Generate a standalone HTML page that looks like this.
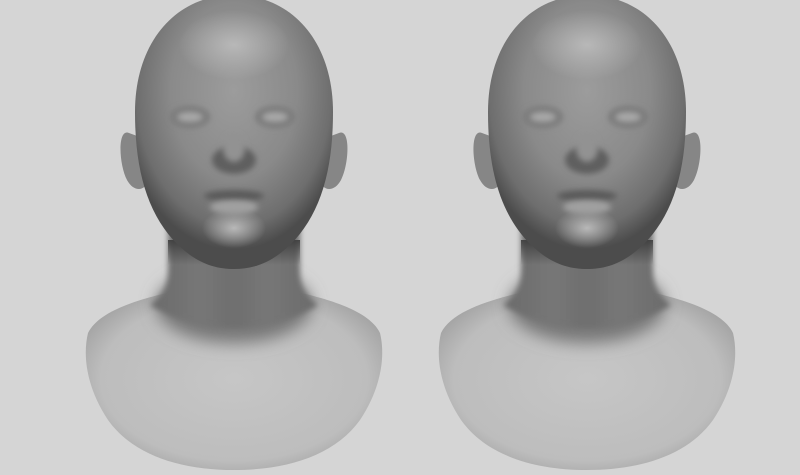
<!DOCTYPE html>
<html><head><style>
html,body{margin:0;padding:0;background:#d5d5d5;width:800px;height:475px;overflow:hidden}
</style></head><body>
<svg width="800" height="475" viewBox="0 0 800 475" xmlns="http://www.w3.org/2000/svg">
<defs>
<filter id="b3" x="-50%" y="-50%" width="200%" height="200%"><feGaussianBlur stdDeviation="3"/></filter>
<filter id="b8" x="-50%" y="-50%" width="200%" height="200%"><feGaussianBlur stdDeviation="8"/></filter>
<radialGradient id="head" cx="0.5" cy="0.35" r="0.58">
<stop offset="0" stop-color="#9c9c9c"/><stop offset="0.55" stop-color="#8a8a8a"/><stop offset="0.85" stop-color="#6e6e6e"/><stop offset="1" stop-color="#4c4c4c"/>
</radialGradient>
<radialGradient id="bust" cx="0.5" cy="0.5" r="0.6">
<stop offset="0" stop-color="#c6c6c6"/><stop offset="0.75" stop-color="#bdbdbd"/><stop offset="1" stop-color="#9c9c9c"/>
</radialGradient>
<linearGradient id="neck" x1="0" y1="0" x2="1" y2="0">
<stop offset="0" stop-color="#6a6a6a"/><stop offset="0.3" stop-color="#777"/><stop offset="0.5" stop-color="#6e6e6e"/><stop offset="0.7" stop-color="#777"/><stop offset="1" stop-color="#6a6a6a"/>
</linearGradient>
<linearGradient id="neckfade" x1="0" y1="0" x2="0" y2="1">
<stop offset="0" stop-color="#3c3c3c" stop-opacity="0.9"/><stop offset="0.3" stop-color="#3c3c3c" stop-opacity="0"/>
</linearGradient>
<radialGradient id="lite" cx="0.5" cy="0.5" r="0.5">
<stop offset="0" stop-color="#b8b8b8"/><stop offset="1" stop-color="#b8b8b8" stop-opacity="0"/>
</radialGradient>
<g id="bustg">
<path d="M190 288 C150 296 100 308 88 333 C82 358 88 390 108 420 C133 455 180 470 234 470 C288 470 335 455 360 420 C380 390 386 358 380 333 C368 308 318 296 278 288 Z" fill="url(#bust)"/>
<ellipse cx="234" cy="305" rx="78" ry="38" fill="#777" filter="url(#b8)"/>
<path d="M168 200 L168 270 C168 290 160 298 150 305 C200 335 268 335 318 305 C308 298 300 290 300 270 L300 200 Z" fill="url(#neck)" filter="url(#b3)"/>
<path d="M168 240 L168 300 C200 330 268 330 300 300 L300 240 Z" fill="url(#neckfade)"/>
<path d="M129 133 C117 128 119 165 127 180 C134 193 146 191 148 180 L148 140 Z" fill="#868686"/>
<path d="M339 133 C351 128 349 165 341 180 C334 193 322 191 320 180 L320 140 Z" fill="#868686"/>
<path d="M234 -5 C292 -5 333 42 333 112 C333 172 320 215 290 245 C270 264 252 269 234 269 C216 269 198 264 178 245 C148 215 135 172 135 112 C135 42 176 -5 234 -5 Z" fill="url(#head)"/>
<ellipse cx="234" cy="45" rx="55" ry="35" fill="url(#lite)"/>
<ellipse cx="234" cy="228" rx="32" ry="20" fill="url(#lite)"/>
<g filter="url(#b3)">
<ellipse cx="190" cy="117" rx="20" ry="11" fill="#7a7a7a"/>
<ellipse cx="275" cy="117" rx="20" ry="11" fill="#7a7a7a"/>
<ellipse cx="234" cy="160" rx="22" ry="14" fill="#5e5e5e"/>
<ellipse cx="234" cy="196" rx="30" ry="6" fill="#5a5a5a"/>
</g>
<ellipse cx="190" cy="117" rx="13" ry="5" fill="#a8a8a8" filter="url(#b3)"/>
<ellipse cx="275" cy="117" rx="13" ry="5" fill="#a8a8a8" filter="url(#b3)"/>
<ellipse cx="234" cy="148" rx="11" ry="14" fill="#929292" filter="url(#b3)"/>
<ellipse cx="234" cy="207" rx="24" ry="7" fill="#a0a0a0" filter="url(#b3)"/>
</g>
</defs>
<use href="#bustg"/>
<use href="#bustg" x="353"/>
</svg>
</body></html>
